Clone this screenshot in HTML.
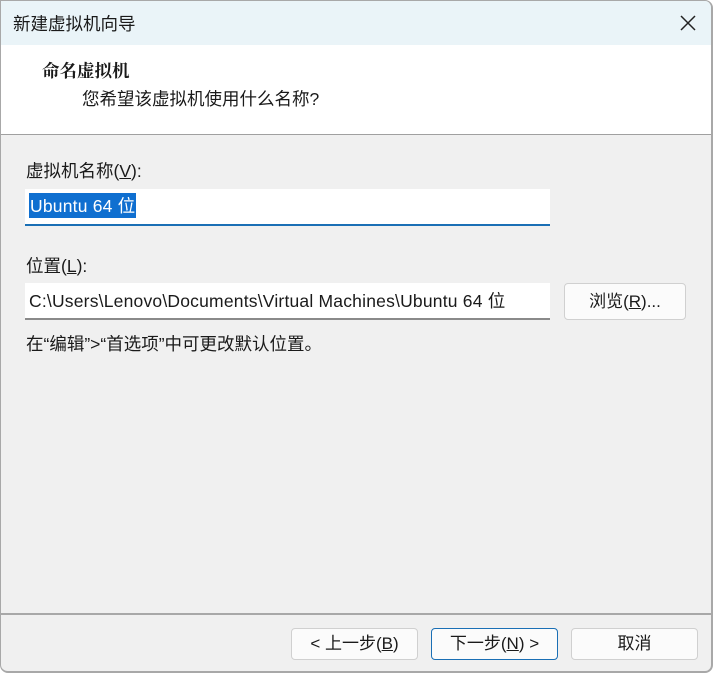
<!DOCTYPE html>
<html><head><meta charset="utf-8"><style>
*{margin:0;padding:0;box-sizing:border-box}
body{width:714px;height:674px;background:#fff;font-family:"Liberation Sans","Noto Sans CJK SC",sans-serif;color:#1a1a1a;overflow:hidden;position:relative}
.win{position:absolute;left:0;top:0;width:713px;height:673px;border:1px solid #a8a8a8;border-right:2px solid #a8a8a8;border-bottom:2px solid #a8a8a8;border-radius:0 8px 8px 8px;background:#f0f0f0;overflow:hidden}
.title{position:absolute;left:0;top:0;right:0;height:44px;background:#eaf4f8;font-size:17.5px}
.title span{position:absolute;left:12px;top:10px}
.x{position:absolute;right:14px;top:13px;width:18px;height:18px}
.head{position:absolute;left:0;top:44px;right:0;height:90px;background:#fff;border-bottom:1px solid #a0a0a0}
.t{position:absolute;font-size:17.5px;white-space:nowrap}
.lat{letter-spacing:0.2px}
.field{position:absolute;left:24px;width:525px;height:37px;background:#fff}
.btn{position:absolute;height:32px;background:#fbfbfb;border:1px solid #d0d0d0;border-radius:4px;font-size:17px;text-align:center;line-height:29px}
u{text-decoration:underline}
</style></head><body>
<div class="win">
<div class="title"><span>新建虚拟机向导</span>
<svg class="x" viewBox="0 0 18 18"><path d="M2 2L16 16M16 2L2 16" stroke="#222" stroke-width="1.5"/></svg></div>
<div class="head">
<div class="t" style="left:41px;top:13px;font-weight:bold;font-family:'Noto Serif CJK SC',serif">命名虚拟机</div>
<div class="t" style="left:81px;top:41px">您希望该虚拟机使用什么名称?</div>
</div>
<div class="t" style="left:25px;top:157px">虚拟机名称(<u>V</u>):</div>
<div class="field" style="top:188px;border-bottom:2px solid #1a6fb5"><span class="t lat" style="left:4px;top:4px;background:#0f6fd0;color:#fff;padding:0 1px">Ubuntu 64 位</span></div>
<div class="t" style="left:25px;top:252px">位置(<u>L</u>):</div>
<div class="field" style="top:282px;border-bottom:2px solid #8a8a8a"><span class="t lat" style="left:4px;top:5px">C:\Users\Lenovo\Documents\Virtual Machines\Ubuntu 64 位</span></div>
<div class="btn" style="left:563px;top:282px;width:122px;height:37px;line-height:35px">浏览(<u>R</u>)...</div>
<div class="t" style="left:25px;top:330px">在“编辑”>“首选项”中可更改默认位置。</div>
<div style="position:absolute;left:0;right:0;top:612px;border-top:2px solid #a8a8a8"></div>
<div class="btn" style="left:290px;top:627px;width:127px">&lt; 上一步(<u>B</u>)</div>
<div class="btn" style="left:430px;top:627px;width:127px;border-color:#1a6fb5">下一步(<u>N</u>) &gt;</div>
<div class="btn" style="left:570px;top:627px;width:127px">取消</div>
</div>
</body></html>
